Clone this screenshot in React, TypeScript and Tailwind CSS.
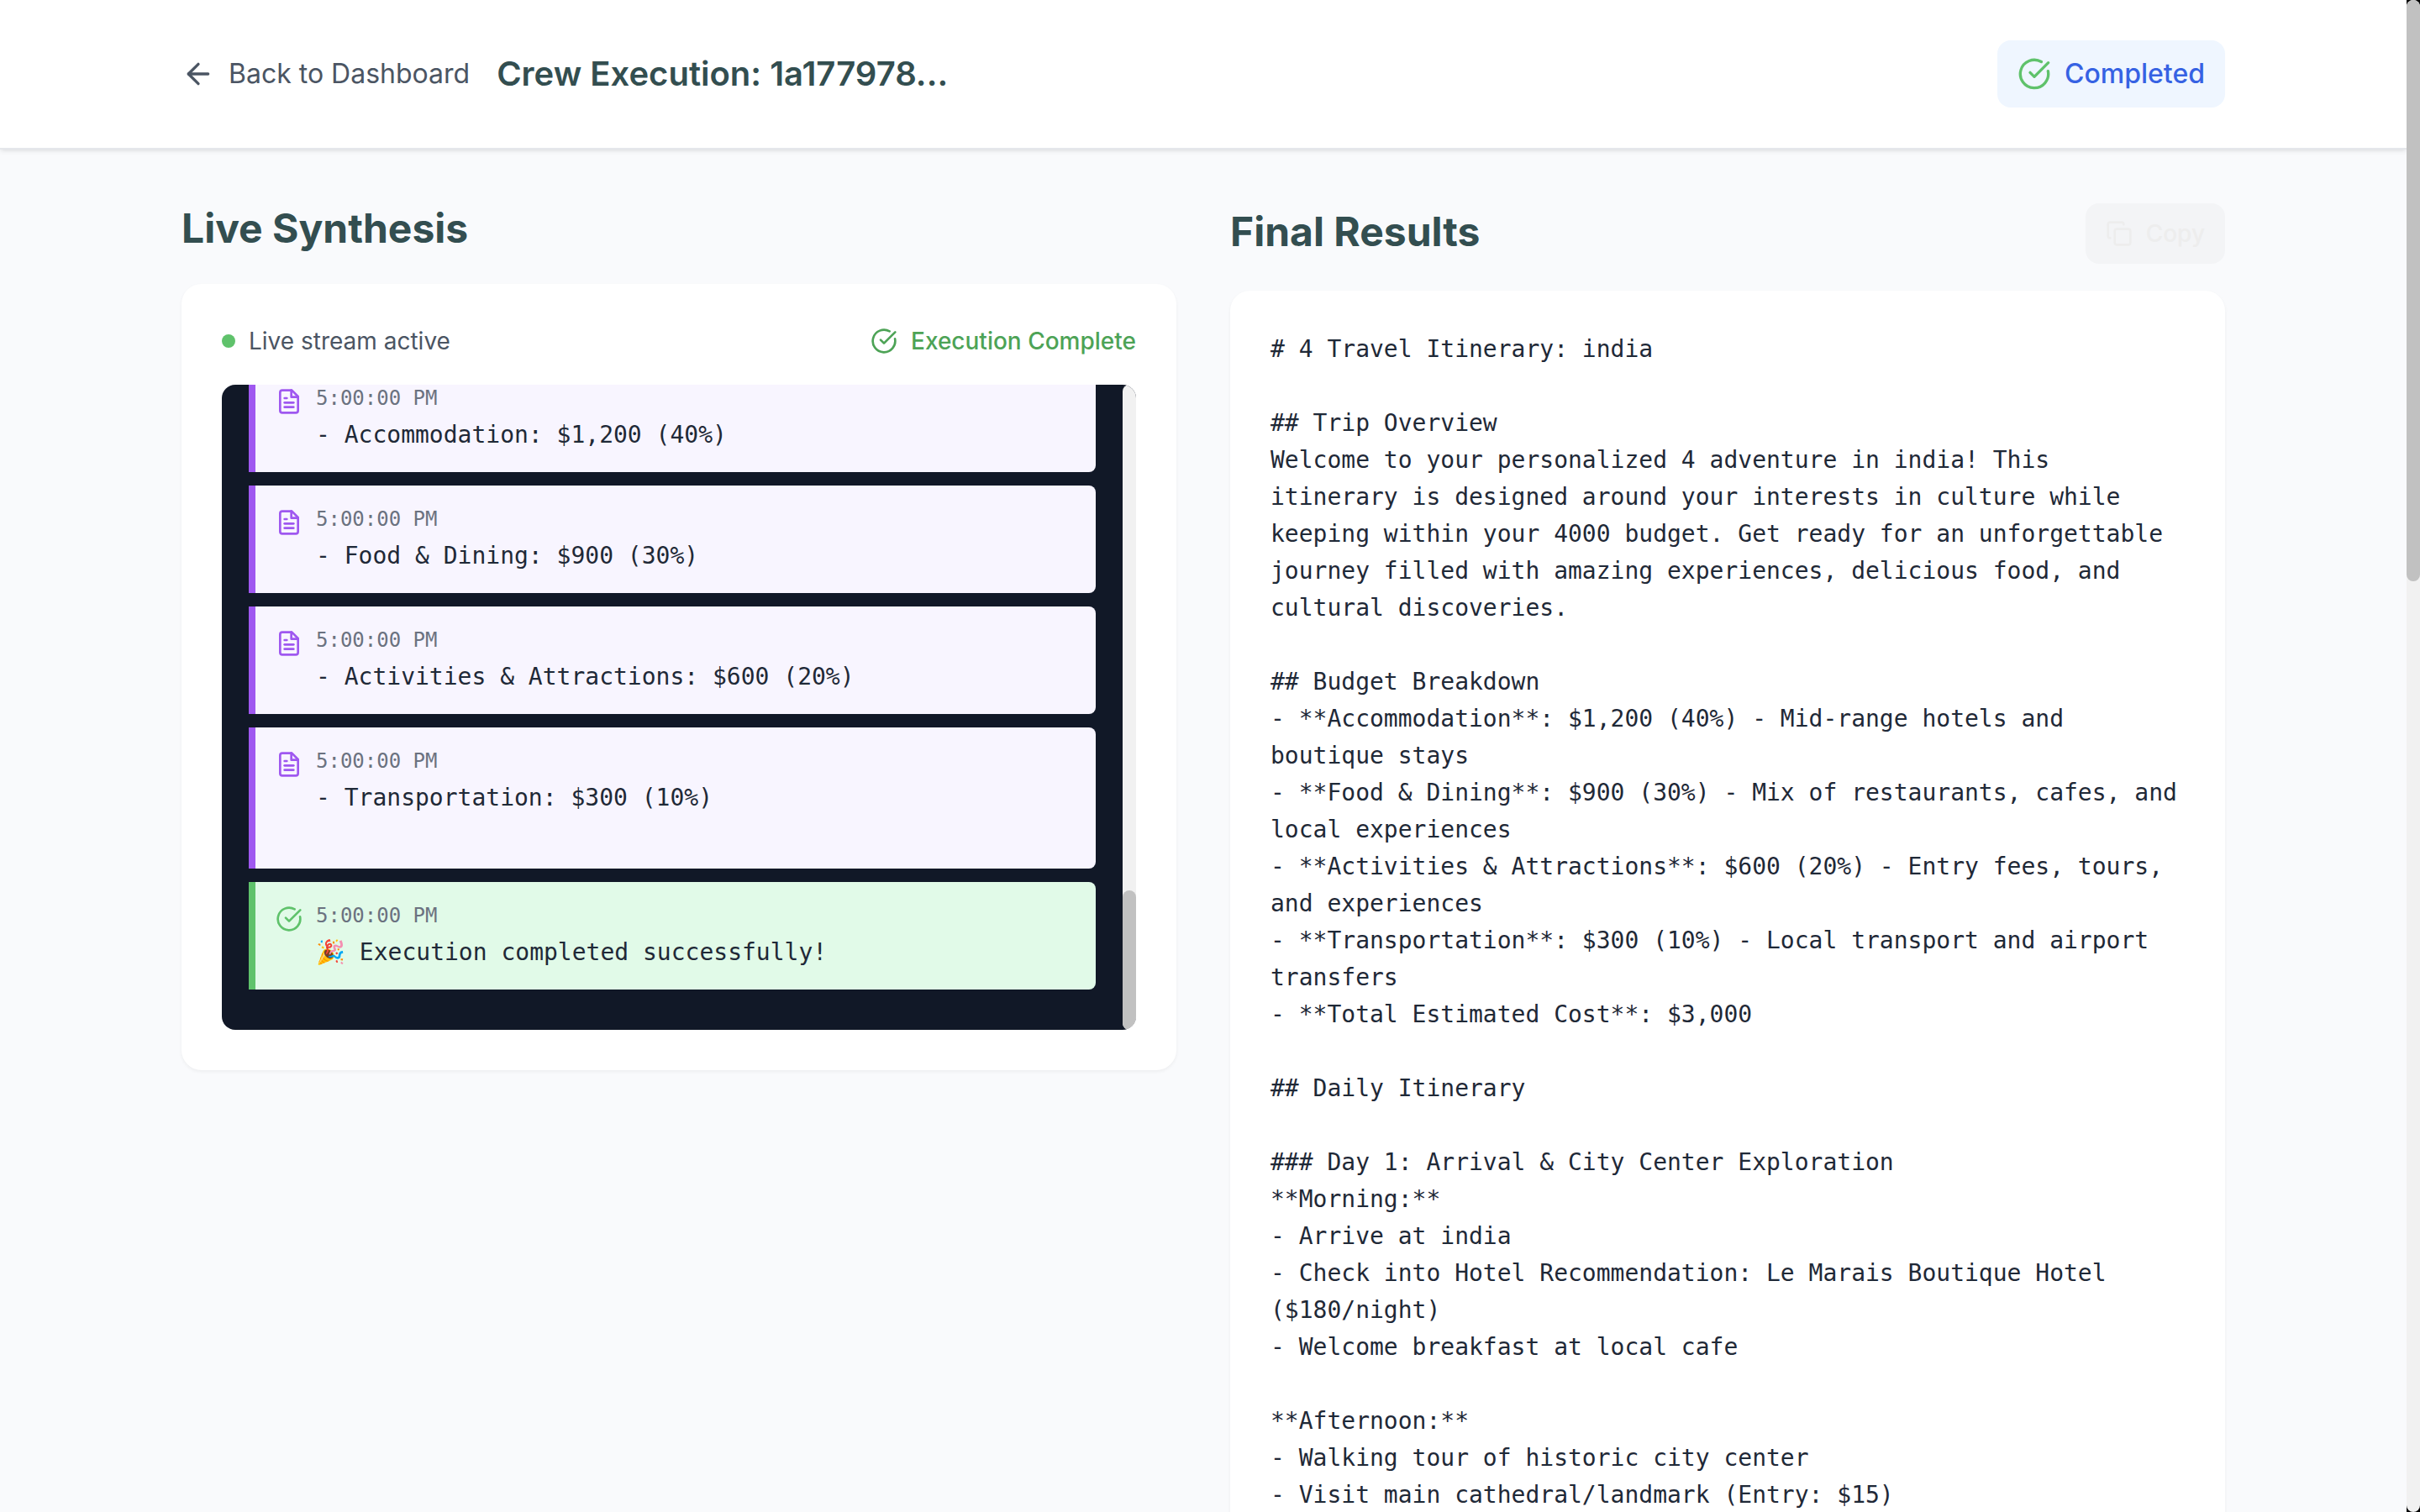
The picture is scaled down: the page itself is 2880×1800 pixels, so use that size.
import { ArrowLeft, CircleCheckBig, Copy } from "lucide-react";

type LogEntry = {
  kind: "output" | "success";
  time: string;
  message: string;
};

const logEntries: LogEntry[] = [
  { kind: "output", time: "5:00:00 PM", message: "- Accommodation: $1,200 (40%)" },
  { kind: "output", time: "5:00:00 PM", message: "- Food & Dining: $900 (30%)" },
  { kind: "output", time: "5:00:00 PM", message: "- Activities & Attractions: $600 (20%)" },
  { kind: "output", time: "5:00:00 PM", message: "- Transportation: $300 (10%)\n\n" },
  { kind: "success", time: "5:00:00 PM", message: "🎉 Execution completed successfully!" },
];

const finalReport = `# 4 Travel Itinerary: india

## Trip Overview
Welcome to your personalized 4 adventure in india! This itinerary is designed around your interests in culture while keeping within your 4000 budget. Get ready for an unforgettable journey filled with amazing experiences, delicious food, and cultural discoveries.

## Budget Breakdown
- **Accommodation**: $1,200 (40%) - Mid-range hotels and boutique stays
- **Food & Dining**: $900 (30%) - Mix of restaurants, cafes, and local experiences
- **Activities & Attractions**: $600 (20%) - Entry fees, tours, and experiences
- **Transportation**: $300 (10%) - Local transport and airport transfers
- **Total Estimated Cost**: $3,000

## Daily Itinerary

### Day 1: Arrival & City Center Exploration
**Morning:**
- Arrive at india
- Check into Hotel Recommendation: Le Marais Boutique Hotel ($180/night)
- Welcome breakfast at local cafe

**Afternoon:**
- Walking tour of historic city center
- Visit main cathedral/landmark (Entry: $15)`;

function FileIcon({ className }: { className: string }) {
  return (
    <svg
      viewBox="0 0 24 24"
      fill="none"
      stroke="currentColor"
      strokeWidth="2"
      strokeLinecap="round"
      strokeLinejoin="round"
      aria-hidden="true"
      className={className}
    >
      <path d="M14.5 2H6a2 2 0 0 0-2 2v16a2 2 0 0 0 2 2h12a2 2 0 0 0 2-2V7.5L14.5 2z" />
      <polyline points="14 2 14 8 20 8" />
      <path d="M16 13H8" />
      <path d="M16 17H8" />
      <path d="M10 9H8" />
    </svg>
  );
}

function LogItem({ entry }: { entry: LogEntry }) {
  const success = entry.kind === "success";
  return (
    <li
      className={
        success
          ? "flex shrink-0 gap-4 rounded-r-lg border-l-8 border-[#5fc26b] bg-[#e1fae8] p-6"
          : "flex shrink-0 gap-4 rounded-r-lg border-l-8 border-[#9f58f0] bg-[#f8f5ff] p-6"
      }
    >
      {success ? (
        <CircleCheckBig className="mt-1 size-8 shrink-0 text-[#5fc26b]" />
      ) : (
        <FileIcon className="mt-1 size-8 shrink-0 text-[#9f58f0]" />
      )}
      <div className="min-w-0 flex-1">
        <time className="mb-2 block text-[24px] leading-8 text-[#6b7280]">{entry.time}</time>
        <p className="text-[28px] leading-10 break-words whitespace-pre-wrap text-[#1f2937]">{entry.message}</p>
      </div>
    </li>
  );
}

function Header() {
  return (
    <header className="relative border-b-2 border-[#e5e7eb] bg-white shadow-[0_2px_6px_rgba(0,0,0,0.08),0_2px_4px_-2px_rgba(0,0,0,0.08)]">
      <div className="mx-auto flex max-w-[2560px] items-center justify-between px-16 py-12">
        <div className="flex items-center gap-8">
          <a href="#dashboard" className="flex items-center gap-4 text-[32px] leading-[48px] text-[#4b5563]">
            <ArrowLeft className="size-10" />
            Back to Dashboard
          </a>
          <h1 className="text-[40px] leading-14 font-semibold text-[#334e50]">Crew Execution: 1a177978...</h1>
        </div>
        <div className="flex items-center gap-4 rounded-2xl bg-[#eff6ff] px-6 py-4 text-[32px] leading-[48px] font-medium text-[#3662e3]">
          <CircleCheckBig className="size-10 text-[#5fc26b]" />
          Completed
        </div>
      </div>
    </header>
  );
}

function LiveSynthesis() {
  return (
    <section className="min-w-0">
      <h2 className="mb-8 pb-1 text-[48px] leading-15 font-bold text-[#334e50]">Live Synthesis</h2>
      <div className="rounded-3xl bg-white p-12 shadow-[0_2px_4px_rgba(0,0,0,0.05)]">
        <div className="mb-8 flex items-center justify-between text-[28px] leading-10">
          <div className="flex items-center gap-4 text-[#4b5563]">
            <span className="size-4 rounded-full bg-[#5fc26b]" />
            Live stream active
          </div>
          <div className="flex items-center gap-4 font-medium text-[#4da356]">
            <CircleCheckBig className="size-8" />
            Execution Complete
          </div>
        </div>
        <div className="flex h-192 overflow-hidden rounded-2xl bg-[#111827]">
          <ul className="flex min-w-0 flex-1 flex-col justify-end gap-4 overflow-hidden px-8 pb-12 font-['DejaVu_Sans_Mono',monospace]">
            {logEntries.map((entry, index) => (
              <LogItem key={index} entry={entry} />
            ))}
          </ul>
          <div className="flex w-4 flex-col justify-end rounded-full bg-[#f1f1f1]">
            <div className="h-[166px] rounded-full bg-[#c1c1c1]" />
          </div>
        </div>
      </div>
    </section>
  );
}

function FinalResults() {
  return (
    <section className="min-w-0">
      <div className="mb-8 flex items-center justify-between">
        <h2 className="pb-1 text-[48px] leading-15 font-bold text-[#334e50]">Final Results</h2>
        <button
          type="button"
          className="flex items-center gap-4 rounded-2xl bg-[#f3f4f6] px-6 py-4 text-[28px] leading-10 font-medium text-[#ededed]"
        >
          <Copy className="size-8" />
          Copy
        </button>
      </div>
      <div className="rounded-3xl bg-white p-12 shadow-[0_2px_4px_rgba(0,0,0,0.05)]">
        <pre className="font-['DejaVu_Sans_Mono',monospace] text-[28px] leading-11 break-words whitespace-pre-wrap text-[#1f2937]">
          {finalReport}
        </pre>
      </div>
    </section>
  );
}

export default function App() {
  return (
    <div className="flex h-screen overflow-hidden bg-[#f9fafc] font-['Inter',sans-serif]">
      <div className="min-w-0 flex-1 overflow-hidden">
        <Header />
        <main className="mx-auto grid max-w-[2560px] grid-cols-2 items-start gap-16 px-16 py-16">
          <LiveSynthesis />
          <FinalResults />
        </main>
      </div>
      <div className="w-4 shrink-0 bg-black">
        <div className="h-full rounded-full bg-[#f1f1f1]">
          <div className="h-[692px] rounded-full bg-[#c1c1c1]" />
        </div>
      </div>
    </div>
  );
}
